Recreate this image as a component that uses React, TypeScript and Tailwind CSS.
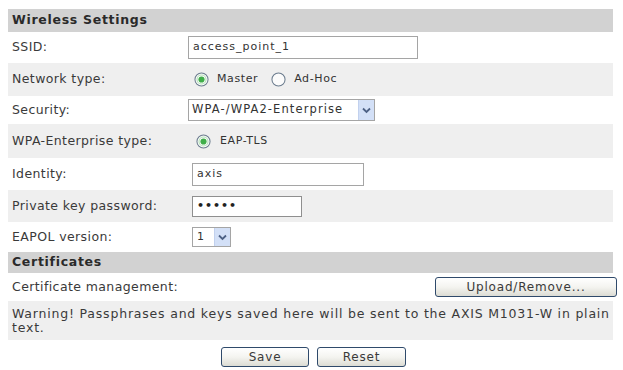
import React from "react";

const font = { fontFamily: '"DejaVu Sans", Verdana, sans-serif' };

function Radio({ checked }: { checked?: boolean }) {
  return (
    <svg width="15" height="15" viewBox="0 0 16 16" className="shrink-0">
      <circle cx="8" cy="8" r="7" fill="#fbfbfb" stroke="#6a7b8d" strokeWidth="1.1" />
      {checked && <circle cx="8" cy="8" r="4.8" fill="none" stroke="#b4e2b9" strokeWidth="1.2" />}
      {checked && <circle cx="8" cy="8" r="3.3" fill="#3fae49" />}
    </svg>
  );
}

function Arrow() {
  return (
    <div className="w-[16px] self-stretch bg-[#d3e0f7] border-l border-[#c2d1ee] flex items-center justify-center">
      <svg width="9" height="7" viewBox="0 0 9 7">
        <path d="M1 1.5 L4.5 5 L8 1.5" fill="none" stroke="#4d6185" strokeWidth="1.8" />
      </svg>
    </div>
  );
}

function Btn({ children, w }: { children: React.ReactNode; w: string }) {
  return (
    <div
      className={`${w} h-[20px] rounded-[3px] border border-[#2f4a6b] bg-gradient-to-b from-[#ffffff] via-[#f4f4f0] to-[#dcdcd4] flex items-center justify-center text-[12px] tracking-[0.8px] text-[#3a3a3a]`}
    >
      {children}
    </div>
  );
}

export default function App() {
  const label = "w-[180px] pl-[4px] shrink-0 text-[12.5px] tracking-[0.4px] text-[#3a3a3a]";
  const value = "text-[11px] tracking-[1px] text-[#333]";
  return (
    <div className="w-[623px] h-[370px] bg-white px-[8px] pt-[9px]" style={font}>
      <div className="w-[605px]">
        <div className="h-[23px] bg-[#d2d2d2] flex items-center pl-[4px] text-[12.5px] tracking-[0.7px] font-bold text-[#2a2a2a]">
          Wireless Settings
        </div>
        <div className="h-[31px] flex items-center">
          <div className={label}>SSID:</div>
          <div className={`w-[230px] h-[23px] border border-[#a5a5a5] flex items-center pl-[4px] ${value}`}>
            access_point_1
          </div>
        </div>
        <div className="h-[33px] flex items-center bg-[#efefef]">
          <div className={label}>Network type:</div>
          <div className="flex items-center pl-[6px] text-[11px] tracking-[0.6px] text-[#333]">
            <Radio checked />
            <span className="ml-[8px] mr-[13px]">Master</span>
            <Radio />
            <span className="ml-[8px]">Ad-Hoc</span>
          </div>
        </div>
        <div className="h-[28px] flex items-center">
          <div className={label}>Security:</div>
          <div className="w-[187px] h-[22px] border border-[#a5a5a5] flex items-stretch text-[11.5px] tracking-[1.1px] text-[#333]">
            <div className="flex-1 flex items-center pl-[3px]">WPA-/WPA2-Enterprise</div>
            <Arrow />
          </div>
        </div>
        <div className="h-[34px] flex items-center bg-[#efefef]">
          <div className={label}>WPA-Enterprise type:</div>
          <div className="flex items-center pl-[8px] text-[11px] tracking-[0.6px] text-[#333]">
            <Radio checked />
            <span className="ml-[9px]">EAP-TLS</span>
          </div>
        </div>
        <div className="h-[32px] flex items-center">
          <div className={label}>Identity:</div>
          <div className={`ml-[4px] w-[172px] h-[23px] border border-[#a5a5a5] flex items-center pl-[4px] ${value}`}>
            axis
          </div>
        </div>
        <div className="h-[32px] flex items-center bg-[#efefef]">
          <div className={label}>Private key password:</div>
          <div className="ml-[4px] w-[110px] h-[21px] border border-[#8f8f8f] bg-white flex items-center pl-[4px] text-[11px] font-bold tracking-[1px] text-[#222]">
            •••••
          </div>
        </div>
        <div className="h-[30px] flex items-center">
          <div className={label}>EAPOL version:</div>
          <div className="ml-[4px] w-[39px] h-[20px] border border-[#a5a5a5] flex items-stretch text-[11px] text-[#333]">
            <div className="flex-1 flex items-center pl-[4px]">1</div>
            <Arrow />
          </div>
        </div>
        <div className="h-[21px] bg-[#d2d2d2] flex items-center pl-[4px] text-[12.5px] tracking-[0.7px] font-bold text-[#2a2a2a]">
          Certificates
        </div>
        <div className="h-[28px] flex items-center justify-between">
          <div className={label}>Certificate management:</div>
          <div className="mr-[-4px]">
            <Btn w="w-[182px]">Upload/Remove...</Btn>
          </div>
        </div>
        <div className="h-[39px] bg-[#efefef] pl-[4px] pt-[6px] text-[12.5px] tracking-[0.8px] leading-[14px] text-[#3a3a3a]">
          Warning! Passphrases and keys saved here will be sent to the AXIS M1031-W in plain text.
        </div>
        <div className="flex justify-center gap-[8px] pt-[7px] pl-[6px]">
          <Btn w="w-[88px]">Save</Btn>
          <Btn w="w-[89px]">Reset</Btn>
        </div>
      </div>
    </div>
  );
}
